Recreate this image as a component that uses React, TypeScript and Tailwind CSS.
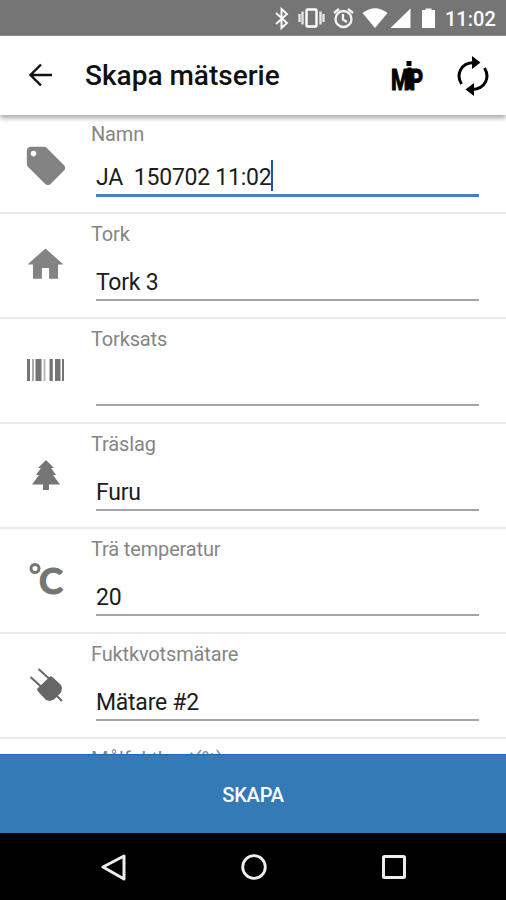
import type { ReactNode } from 'react'
import { clsx } from 'clsx'

interface Field {
  label: string
  value: string
  icon: ReactNode
  active?: boolean
}

function TagIcon() {
  return (
    <svg width="46" height="46" viewBox="0 0 24 24" fill="#838383">
      <path d="M21.41 11.58l-9-9C12.05 2.22 11.55 2 11 2H4c-1.1 0-2 .9-2 2v7c0 .55.22 1.05.59 1.42l9 9c.36.36.86.58 1.41.58.55 0 1.05-.22 1.41-.59l7-7c.37-.36.59-.86.59-1.41 0-.55-.23-1.06-.59-1.42zM5.5 7C4.67 7 4 6.33 4 5.5S4.67 4 5.5 4 7 4.67 7 5.5 6.33 7 5.5 7z" />
    </svg>
  )
}

function HomeIcon() {
  return (
    <svg width="43" height="43" viewBox="0 0 24 24" fill="#838383">
      <path d="M10 20v-6h4v6h5v-8h3L12 3 2 12h3v8z" />
    </svg>
  )
}

function BarcodeIcon() {
  return (
    <svg width="38" height="24" viewBox="0 0 38 24" fill="#757575">
      <rect x="0" y="1" width="3" height="22" />
      <rect x="5" y="1" width="2" height="22" opacity=".6" />
      <rect x="8.5" y="1" width="6" height="22" />
      <rect x="16.5" y="1" width="2" height="22" opacity=".5" />
      <rect x="22.5" y="1" width="3.3" height="22" />
      <rect x="28" y="1" width="5.500" height="22" />
      <rect x="35" y="1" width="2" height="22" />
    </svg>
  )
}

function TreeIcon() {
  return (
    <svg width="28" height="30" viewBox="0 0 28 30" fill="#757575">
      <path d="M14 0l8 8h-3l5 7h-3l7 9.5H17V30h-6v-5.5H0L7 15H4l5-7H6z" />
    </svg>
  )
}

function CelsiusIcon() {
  return (
    <svg width="36" height="36" viewBox="0 0 36 36" className="overflow-visible" fill="#757575" stroke="#757575">
      <circle cx="7" cy="6.500" r="4" fill="none" strokeWidth="3" />
      <text x="11" y="31.500" fontSize="36" fontWeight="700" strokeWidth="1.200" textLength="24" lengthAdjust="spacingAndGlyphs" className="font-[Lato,sans-serif]">
        C
      </text>
    </svg>
  )
}

function PlugIcon() {
  return (
    <svg width="34" height="34" viewBox="0 0 34 34" fill="#666" stroke="#666">
      <path d="M9.500 1l11 10M1.500 9l11 10M26 26l7 7" strokeWidth="2" />
      <path d="M19.500 10l2-2 2.500 1.500 8 7.500 1 3-1 4.500-7 7-4.500 1.500-3.500-1-8-8.500-1-2.500 2-2z" strokeWidth="0" />
    </svg>
  )
}

const fields: Field[] = [
  { label: 'Namn', value: 'JA  150702 11:02', icon: <TagIcon />, active: true },
  { label: 'Tork', value: 'Tork 3', icon: <HomeIcon /> },
  { label: 'Torksats', value: '', icon: <BarcodeIcon /> },
  { label: 'Träslag', value: 'Furu', icon: <TreeIcon /> },
  { label: 'Trä temperatur', value: '20', icon: <CelsiusIcon /> },
  { label: 'Fuktkvotsmätare', value: 'Mätare #2', icon: <PlugIcon /> },
]

function StatusBar() {
  return (
    <div className="flex h-9 shrink-0 items-center border-b border-[#909090] bg-[#757575] text-white">
      <svg width="176" height="35" viewBox="264 0 176 35" fill="#fff" className="ml-auto">
        {/* Bluetooth */}
        <path d="M276 13l11 10-5.500 5V9l5.500 5-11 10" fill="none" stroke="#fff" strokeWidth="1.900" />
        {/* Vibrate */}
        <rect x="306.500" y="9.500" width="10" height="17" rx="1" fill="none" stroke="#fff" strokeWidth="2.400" />
        <path d="M302.500 11.500v13M299.500 14v8M320.500 11.500v13M323.500 14v8" stroke="#e4e4e4" strokeWidth="2.400" />
        {/* Alarm */}
        <g fill="none" stroke="#f4f4f4" strokeWidth="2.300">
          <circle cx="343.500" cy="19" r="8" />
          <path d="M334 13l5-4M353 13l-5-4M343 14v5.500l4 2.500" />
        </g>
        <path d="M362.500 13q12.500-9.500 25 0L375 28z" />
        <path d="M410.500 8.500V28H390.500z" />
        <path d="M422 10h3.500V8.500h6V10h3.500v18h-13z" />
      </svg>
      <span className="mr-[11px] w-[55px] pl-[5px] pt-0.5 text-[20px] leading-6 font-medium whitespace-nowrap">11:02</span>
    </div>
  )
}

function MipLogo() {
  return (
    <svg width="32" height="32" viewBox="0 0 32 32" className="overflow-visible" stroke="#000">
      <text x="0" y="30.500" fontSize="30" fontWeight="700" textLength="32" lengthAdjust="spacingAndGlyphs" strokeWidth="1.200">
        MP
      </text>
      {/* the i shares its stem with the P */}
      <rect x="16" y="2.500" width="4" height="4" strokeWidth="1" />
      <rect x="17" y="9" width="3" height="21" strokeWidth="1" />
    </svg>
  )
}

function AppBar() {
  return (
    <header className="relative z-10 flex h-[79px] shrink-0 items-center bg-white shadow-[0_3px_5px_rgba(0,0,0,0.35)]">
      <svg width="24" height="24" viewBox="0 0 24 24" fill="none" stroke="#111" strokeWidth="2.400" className="mb-0.5 ml-7">
        <path d="M24 12H3M13 1.500L2.500 12 13 22.500" />
      </svg>
      <h1 className="ml-[33px] flex-1 pt-px text-[28px] leading-8 font-medium text-[#111]">Skapa mätserie</h1>
      <div className="mr-[34px] mb-0.5">
        <MipLogo />
      </div>
      <svg width="32" height="40" viewBox="0 0 32 40" fill="none" stroke="#000" strokeWidth="3" className="mr-[17px]">
        <path d="M4.500 28C-1 19 3 7 17 6.500M27.500 12C33 21 29 33 15 33.500" />
        <path d="M15 0l8.500 6.500L15 13zM17 27l-8.500 6.500L17 40z" fill="#000" stroke="none" />
      </svg>
    </header>
  )
}

function FieldRow({ field }: { field: Field }) {
  return (
    <div className={clsx('flex shrink-0 border-b-2 border-[#e9e9e9]', field.active ? 'h-[99px]' : 'h-[105px]')}>
      <div className={clsx('flex w-[91px] items-center justify-center', field.active ? 'pt-1' : 'pb-0.5')}>
        {field.icon}
      </div>
      <div className="flex w-[388px] flex-col">
        <div className={clsx('text-[20px] leading-6 tracking-[-0.15px] text-[#858585]', field.active ? 'pt-[7px]' : 'pt-2')}>
          {field.label}
        </div>
        <div
          className={clsx(
            'ml-[5px] flex items-end pb-[3px] text-[#1c1c1c]',
            field.active ? 'h-[51px] border-b-[3px] border-[#4f7fb8]' : 'h-[55px] border-b-2 border-[#a5a5a5]',
          )}
        >
          <span className="text-[23px] leading-[27px] tracking-[-0.25px] whitespace-pre">{field.value}</span>
          {field.active && <span className="h-[31px] w-0.5 bg-[#2158a5]" />}
        </div>
      </div>
    </div>
  )
}

export default function App() {
  return (
    <div className="flex h-[900px] w-[506px] flex-col overflow-hidden bg-white font-[Roboto,sans-serif]">
      <StatusBar />
      <AppBar />
      <main className="flex min-h-0 flex-1 flex-col overflow-hidden">
        {fields.map((field) => (
          <FieldRow key={field.label} field={field} />
        ))}
        <div className="ml-[91px] pt-2 text-[20px] leading-6 tracking-[-0.15px] text-[#858585]">Målfuktkvot(%)</div>
      </main>
      <button className="h-[79px] shrink-0 border-t border-[#1c69ac] bg-[#337ab7] pt-0.5 text-[20px] font-medium tracking-[-0.2px] text-white">
        SKAPA
      </button>
      <nav className="flex h-[67px] shrink-0 items-center justify-center gap-[114px] bg-black pl-0.5">
        <svg width="26" height="28" viewBox="0 0 26 28" fill="none" stroke="#eee" strokeWidth="3" strokeLinejoin="round">
          <path d="M23 3v23L2 14z" />
        </svg>
        <svg width="26" height="26" viewBox="0 0 26 26" fill="none" stroke="#eee" strokeWidth="2.800">
          <circle cx="13" cy="13" r="11.300" />
        </svg>
        <svg width="26" height="26" viewBox="0 0 26 26" fill="none" stroke="#eee" strokeWidth="3">
          <rect x="2.500" y="2.500" width="21" height="21" rx="1" />
        </svg>
      </nav>
    </div>
  )
}
